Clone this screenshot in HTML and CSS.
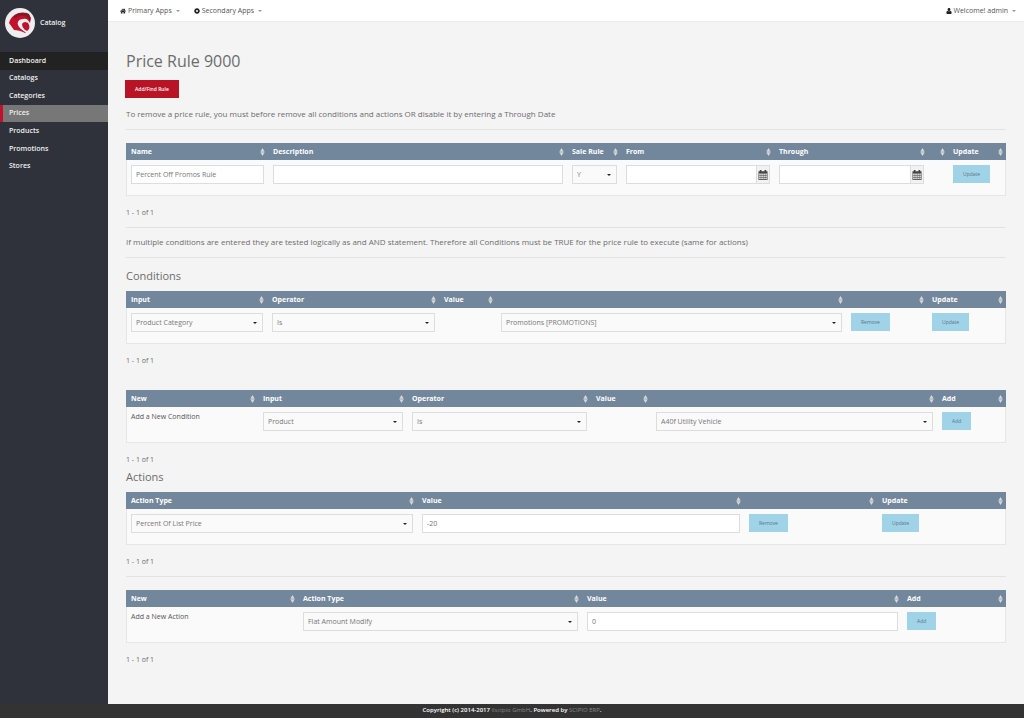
FILE: index.html
```
<!DOCTYPE html>
<html lang="en">
<head>
<meta charset="utf-8">
<title>Price Rule 9000</title>
<link rel="stylesheet" href="styles.css">
</head>
<body>
<svg class="defs" aria-hidden="true">
  <symbol id="sort" viewBox="0 0 5 8"><path d="M2.5 0 4.7 3.700H.3zM2.500 8 .3 4.300h4.400z"/></symbol>
  <symbol id="cal" viewBox="0 0 10 10"><path fill-rule="evenodd" d="M.5 1.300h1.300V0h1.700v1.300h3V0h1.700v1.300h1.300V10h-9zM1.200 3.400v1.500h1.500V3.400zM3.300 3.400v1.500h1.500V3.400zM5.400 3.400v1.500h1.400V3.400zM7.400 3.400v1.500h1.400V3.400zM1.200 5.500v1.500h1.500V5.500zM3.300 5.500v1.500h1.500V5.500zM5.400 5.500v1.500h1.400V5.500zM7.400 5.500v1.500h1.400V5.500zM1.200 7.600v1.600h1.500V7.600zM3.300 7.600v1.600h1.500V7.600zM5.400 7.600v1.600h1.400V7.600zM7.400 7.600v1.600h1.400V7.600z"/></symbol>
</svg>
<div class="app">
  <aside class="sidebar">
    <div class="brand">
      <svg class="logo" viewBox="0 0 30 30" aria-hidden="true">
        <circle cx="15" cy="15" r="15" fill="#eeeef0"/>
        <path fill="#c2112c" d="M4 15C6 8 11 5 17 5c6 0 8 3 9 5l-1 5c-2-4-4-5-7-4-4 0-6 3-5 6 1 3 4 5 8 7l-1 1c-3-2-8-3-11-3z"/>
        <path fill="#8c1526" d="M9 8c4-4 9-4 13-3 3 1 4 4 3 8-2-4-5-6-9-5-3 0-5 1-7 3z"/>
        <path fill="#c2112c" d="M17 16c1-2 4-3 6-1 2 3 2 6-1 8-3-1-5-4-5-7z"/>
        <path fill="none" stroke="#eeeef0" stroke-width="1.500" d="M22 24c-5-2-7-6-6-9 1-3 4-3 6-1"/>
      </svg>
      <span>Catalog</span>
    </div>
    <nav aria-label="Catalog">
      <ul class="menu">
        <li class="dark"><a href="#">Dashboard</a></li>
        <li><a href="#">Catalogs</a></li>
        <li><a href="#">Categories</a></li>
        <li class="active"><a href="#" aria-current="page">Prices</a></li>
        <li><a href="#">Products</a></li>
        <li><a href="#">Promotions</a></li>
        <li><a href="#">Stores</a></li>
      </ul>
    </nav>
  </aside>
  <div class="page">
    <header class="topbar">
      <a href="#"><svg viewBox="0 0 12 12" aria-hidden="true"><path d="M6 1 0 6.500l.8.9L6 2.800l5.200 4.600.8-.9-2-1.900V1.500H8.500v1.700zM6 3.800 1.800 7.500V11H5V8h2v3h3.200V7.500z"/></svg>Primary Apps<i class="caret"></i></a>
      <a href="#"><svg viewBox="0 0 12 12" aria-hidden="true"><path fill-rule="evenodd" d="M5 0h2l.4 1.600 1 .4L9.800 1.200l1 1.200L10 3.600l.4 1L12 5v2l-1.600.4-.4 1 .8 1.400-1.200 1L8.400 10l-1 .4L7 12H5l-.4-1.600-1-.4-1.400.8-1-1.200L2 8.400l-.4-1L0 7V5l1.600-.4.4-1-.8-1.400 1.200-1L3.600 2l1-.4zM6 4a2 2 0 1 0 0 4 2 2 0 0 0 0-4z"/></svg>Secondary Apps<i class="caret"></i></a>
      <a href="#" class="user"><svg viewBox="0 0 12 12" aria-hidden="true"><path d="M6 0c1.700 0 2.800 1.300 2.800 3S7.700 6.200 6 6.200 3.200 4.700 3.200 3 4.300 0 6 0zM3.300 5.500C4.800 7 7.200 7 8.700 5.500c1.800.2 2.500 2 2.500 4.500 0 1-.7 1.800-1.700 1.800h-7C1.500 11.800.8 11 .8 10c0-2.500.7-4.300 2.500-4.500z"/></svg>Welcome! admin<i class="caret"></i></a>
    </header>
    <main>
      <h1>Price Rule 9000</h1>
      <a class="find" href="#">Add/Find Rule</a>
      <p class="note">To remove a price rule, you must before remove all conditions and actions OR disable it by entering a Through Date</p>
      <hr class="wide">

      <table class="grid rule">
        <colgroup><col><col><col><col><col><col><col></colgroup>
        <thead><tr>
          <th><div>Name<svg><use href="#sort"/></svg></div></th>
          <th><div>Description<svg><use href="#sort"/></svg></div></th>
          <th><div>Sale Rule<svg><use href="#sort"/></svg></div></th>
          <th><div>From<svg><use href="#sort"/></svg></div></th>
          <th><div>Through<svg><use href="#sort"/></svg></div></th>
          <th><div><svg><use href="#sort"/></svg></div></th>
          <th><div>Update<svg><use href="#sort"/></svg></div></th>
        </tr></thead>
        <tbody><tr>
          <td><input class="field" type="text" aria-label="Name" value="Percent Off Promos Rule"></td>
          <td><input class="field" type="text" aria-label="Description"></td>
          <td><select class="field" aria-label="Sale Rule"><option>Y</option></select></td>
          <td><div class="date"><input class="field" type="text" aria-label="From"><button type="button" aria-label="Pick from date"><svg><use href="#cal"/></svg></button></div></td>
          <td><div class="date"><input class="field" type="text" aria-label="Through"><button type="button" aria-label="Pick through date"><svg><use href="#cal"/></svg></button></div></td>
          <td></td>
          <td><button class="btn" type="button">Update</button></td>
        </tr></tbody>
      </table>
      <p class="count">1 - 1 of 1</p>
      <hr>
      <p class="hint">If multiple conditions are entered they are tested logically as and AND statement. Therefore all Conditions must be TRUE for the price rule to execute (same for actions)</p>
      <hr>

      <h2>Conditions</h2>
      <table class="grid conditions">
        <colgroup><col><col><col><col><col><col></colgroup>
        <thead><tr>
          <th><div>Input<svg><use href="#sort"/></svg></div></th>
          <th><div>Operator<svg><use href="#sort"/></svg></div></th>
          <th><div>Value<svg><use href="#sort"/></svg></div></th>
          <th><div><svg><use href="#sort"/></svg></div></th>
          <th><div><svg><use href="#sort"/></svg></div></th>
          <th><div>Update<svg><use href="#sort"/></svg></div></th>
        </tr></thead>
        <tbody><tr>
          <td><select class="field" aria-label="Input"><option>Product Category</option></select></td>
          <td><select class="field" aria-label="Operator"><option>Is</option></select></td>
          <td></td>
          <td><select class="field" aria-label="Value"><option>Promotions [PROMOTIONS]</option></select></td>
          <td><button class="btn" type="button">Remove</button></td>
          <td><button class="btn" type="button">Update</button></td>
        </tr></tbody>
      </table>
      <p class="count">1 - 1 of 1</p>

      <table class="grid new-condition">
        <colgroup><col><col><col><col><col><col></colgroup>
        <thead><tr>
          <th><div>New<svg><use href="#sort"/></svg></div></th>
          <th><div>Input<svg><use href="#sort"/></svg></div></th>
          <th><div>Operator<svg><use href="#sort"/></svg></div></th>
          <th><div>Value<svg><use href="#sort"/></svg></div></th>
          <th><div><svg><use href="#sort"/></svg></div></th>
          <th><div>Add<svg><use href="#sort"/></svg></div></th>
        </tr></thead>
        <tbody><tr>
          <td>Add a New Condition</td>
          <td><select class="field" aria-label="Input"><option>Product</option></select></td>
          <td><select class="field" aria-label="Operator"><option>Is</option></select></td>
          <td></td>
          <td><select class="field" aria-label="Value"><option>A40f Utility Vehicle</option></select></td>
          <td><button class="btn" type="button">Add</button></td>
        </tr></tbody>
      </table>
      <p class="count">1 - 1 of 1</p>

      <h2 class="tight">Actions</h2>
      <table class="grid actions">
        <colgroup><col><col><col><col></colgroup>
        <thead><tr>
          <th><div>Action Type<svg><use href="#sort"/></svg></div></th>
          <th><div>Value<svg><use href="#sort"/></svg></div></th>
          <th><div><svg><use href="#sort"/></svg></div></th>
          <th><div>Update<svg><use href="#sort"/></svg></div></th>
        </tr></thead>
        <tbody><tr>
          <td><select class="field" aria-label="Action Type"><option>Percent Of List Price</option></select></td>
          <td><input class="field" type="text" aria-label="Value" value="-20"></td>
          <td><button class="btn" type="button">Remove</button></td>
          <td><button class="btn" type="button">Update</button></td>
        </tr></tbody>
      </table>
      <p class="count">1 - 1 of 1</p>
      <hr class="wide">

      <table class="grid new-action">
        <colgroup><col><col><col><col></colgroup>
        <thead><tr>
          <th><div>New<svg><use href="#sort"/></svg></div></th>
          <th><div>Action Type<svg><use href="#sort"/></svg></div></th>
          <th><div>Value<svg><use href="#sort"/></svg></div></th>
          <th><div>Add<svg><use href="#sort"/></svg></div></th>
        </tr></thead>
        <tbody><tr>
          <td>Add a New Action</td>
          <td><select class="field" aria-label="Action Type"><option>Flat Amount Modify</option></select></td>
          <td><input class="field" type="text" aria-label="Value" value="0"></td>
          <td><button class="btn" type="button">Add</button></td>
        </tr></tbody>
      </table>
      <p class="count">1 - 1 of 1</p>
    </main>
  </div>
</div>
<footer>Copyright (c) 2014-2017 <a href="#">ilscipio GmbH</a>. Powered by <a href="#">SCIPIO ERP</a>.</footer>
</body>
</html>
```
FILE: styles.css
```
* { box-sizing: border-box; }
body {
  margin: 0;
  min-height: 100vh;
  display: flex;
  flex-direction: column;
  background: #f4f4f4;
  color: #6c6c6c;
  font: 7px/12px "Open Sans", sans-serif;
}
a { color: inherit; text-decoration: none; }
.defs { display: none; }
.app { flex: 1; display: flex; }

.sidebar { width: 108px; flex: none; background: #2f323b; color: #f0f0f0; font-weight: 600; }
.brand { display: flex; align-items: center; gap: 5px; padding: 8px 5px 14px; }
.logo { width: 30px; height: 30px; }
.menu { margin: 0; padding: 0; height: 123px; list-style: none; display: grid; grid-auto-rows: 1fr; }
.menu li { display: flex; align-items: center; border-left: 3px solid transparent; }
.menu a { flex: 1; padding-left: 6px; }
.menu .dark { background: #222; border-color: #222; }
.menu .active { background: #777; border-color: #c2112c; }

.page { flex: 1; min-width: 0; }
.topbar {
  display: flex;
  align-items: center;
  gap: 14px;
  height: 22px;
  padding: 0 8px 0 12px;
  background: #fff;
  border-bottom: 1px solid #ececec;
  color: #555;
}
.topbar a { display: flex; align-items: center; }
.topbar svg { width: 6px; height: 6px; margin-right: 2px; fill: #222; }
.topbar .user { margin-left: auto; }
.topbar .user svg { margin-right: 1px; }
.caret { margin-left: 4px; border: 2px solid transparent; border-top-color: #999; border-bottom: 0; }

main { padding: 26px 18px 20px; }
h1 { margin: 0 0 6px; font-size: 16px; line-height: 26px; font-weight: 400; }
.find {
  display: inline-block;
  margin-left: -1px;
  padding: 0 10px;
  background: #b81426;
  color: #fff;
  font-size: 5px;
  line-height: 18px;
  font-weight: 600;
}
.note { margin: 10px 0 9px; font-size: 8px; }
hr { margin: 0; border: 0; border-top: 1px solid #e2e2e2; }
.wide { margin-bottom: 13px; }
.hint { margin: 8px 0 9px; font-size: 8px; }
h2 { margin: 9px 0 6px; font-size: 11px; line-height: 18px; font-weight: 400; }
.tight { margin-top: -6px; }
.count { margin: 11px 0 8px; }

.grid {
  width: 100%;
  table-layout: fixed;
  border-collapse: separate;
  border-spacing: 0;
  background: #fafafa;
  box-shadow: inset 0 0 0 1px #e6e6e6;
}
.grid th { padding: 0 3px 0 5px; background: #73879c; color: #fff; text-align: left; font-weight: 700; }
.grid th div { display: flex; justify-content: space-between; align-items: center; height: 17px; }
.grid th svg { width: 5px; height: 8px; margin-left: auto; fill: #d8d8d8; }
.grid td { height: 36px; padding: 5px 4px 11px 5px; vertical-align: top; color: #555; line-height: 10px; }
.count + .grid { margin-top: 23px; }

.field {
  display: block;
  width: 100%;
  height: 19px;
  margin: 0;
  padding: 0 4px;
  border: 1px solid #ddd;
  border-radius: 0;
  background: #fff;
  color: #777;
  font: inherit;
}
select.field {
  appearance: none;
  background: #fafafa url("data:image/svg+xml,%3Csvg xmlns='http://www.w3.org/2000/svg' width='4' height='2'%3E%3Cpath d='M0 0h4L2 2z' fill='%23222'/%3E%3C/svg%3E") no-repeat right 5px center;
}
.date { display: flex; }
.date .field { flex: 1; min-width: 0; }
.date button {
  width: 13px;
  padding: 0;
  border: 1px solid #ddd;
  border-left: 0;
  background: #f2f2f2;
  display: grid;
  place-items: center;
}
.date svg { width: 10px; height: 10px; fill: #444; }
.btn {
  display: block;
  height: 18px;
  padding: 0 10px;
  border: 0;
  background: #a0d3e8;
  color: #5c7480;
  font: 5px/18px "Open Sans", sans-serif;
}

.rule col:nth-child(1) { width: 142px; }
.rule col:nth-child(2) { width: 299px; }
.rule col:nth-child(3) { width: 54px; }
.rule col:nth-child(4) { width: 153px; }
.rule col:nth-child(5) { width: 154px; }
.rule col:nth-child(6) { width: 20px; }
.rule col:nth-child(7) { width: 58px; }

.conditions col:nth-child(1) { width: 141px; }
.conditions col:nth-child(2) { width: 172px; }
.conditions col:nth-child(3) { width: 57px; }
.conditions col:nth-child(4) { width: 350px; }
.conditions col:nth-child(5) { width: 81px; }
.conditions col:nth-child(6) { width: 79px; }

.new-condition col:nth-child(1) { width: 132px; }
.new-condition col:nth-child(2) { width: 149px; }
.new-condition col:nth-child(3) { width: 184px; }
.new-condition col:nth-child(4) { width: 60px; }
.new-condition col:nth-child(5) { width: 286px; }
.new-condition col:nth-child(6) { width: 69px; }

.actions col:nth-child(1) { width: 291px; }
.actions col:nth-child(2) { width: 327px; }
.actions col:nth-child(3) { width: 133px; }
.actions col:nth-child(4) { width: 129px; }

.new-action col:nth-child(1) { width: 172px; }
.new-action col:nth-child(2) { width: 284px; }
.new-action col:nth-child(3) { width: 320px; }
.new-action col:nth-child(4) { width: 104px; }

footer { padding: 0 0 2px; background: #333; color: #fff; font-size: 6px; font-weight: 600; text-align: center; }
footer a { color: #888; font-weight: 400; }
```
